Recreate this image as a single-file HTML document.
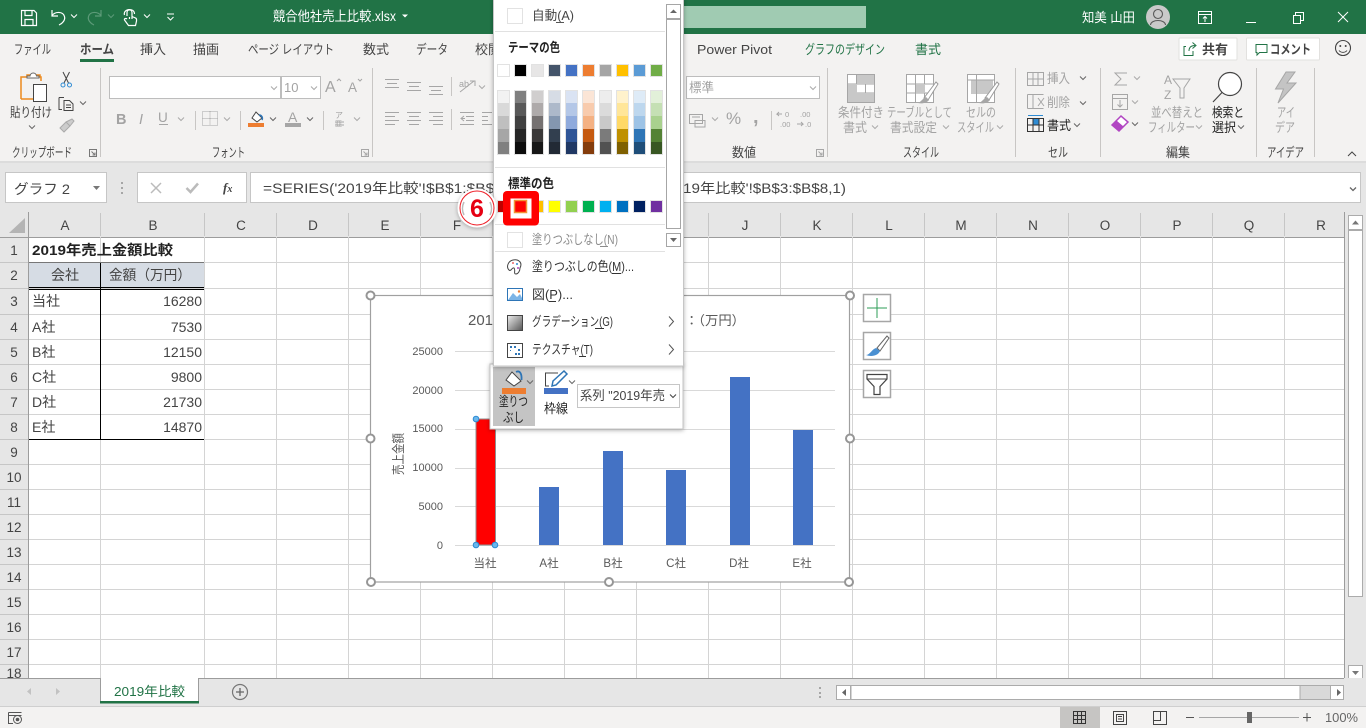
<!DOCTYPE html>
<html lang="ja"><head><meta charset="utf-8"><title>競合他社売上比較.xlsx - Excel</title>
<style>
html,body{margin:0;padding:0;background:#fff;overflow:hidden}
svg{display:block;font-family:"Liberation Sans","Noto Sans CJK JP",sans-serif;font-size:13px}
text{fill:#444;white-space:pre}
.d{fill:#a3a3a3}.w{fill:#fff}.g{fill:#217346}.k{fill:#222}.m{fill:#595959}
.n{fill:none}.ic{fill:none;stroke:#444;stroke-width:1}.dc{fill:none;stroke:#a6a6a6;stroke-width:1}
.ch{fill:none;stroke:#666;stroke-width:1}.chd{fill:none;stroke:#aaa;stroke-width:1}
.gl line{stroke:#d4d4d4;stroke-width:1}
.c{text-anchor:middle}.r{text-anchor:end}
.sw rect{stroke:#e2e2e2;stroke-width:1}
.hd{fill:#fff;stroke:#969696;stroke-width:2}
.bh{fill:#6bb7ec;stroke:#2e8bd3;stroke-width:1}
</style></head><body>
<svg width="1366" height="728" viewBox="0 0 1366 728" xmlns="http://www.w3.org/2000/svg">
<defs>
<path id="c" d="M-3-1.5L0 1.5L3-1.5"/>
<filter id="sh" x="-10%" y="-10%" width="120%" height="120%"><feDropShadow dx="0" dy="1" stdDeviation="2" flood-color="#000" flood-opacity=".3"/></filter>
<linearGradient id="gg" x1="0" y1="0" x2="1" y2="1"><stop offset="0" stop-color="#eee"/><stop offset="1" stop-color="#555"/></linearGradient>
</defs>
<rect width="1366" height="728" fill="#fff"/>
<!-- title bar -->
<rect width="1366" height="34" fill="#217346"/>
<rect x="673" y="6" width="193" height="22" fill="#a0cbb2"/>
<g fill="none" stroke="#fff" stroke-width="1.2">
<path d="M21.5 10.5H34L36.5 13V25.5H21.5Z M25 10.5V15.5H32V10.5 M25 25.5V19.5H33V25.5"/>
<path d="M52 10V16H58 M52 15.5C55 11.5 63 11 64.5 16.5C65.5 20 62.5 23.5 59 25"/>
<path d="M101 10V16H95 M101 15.5C98 11.5 90 11 88.5 16.5C87.5 20 90.5 23.5 94 25" stroke="#5c9a78"/>
<path d="M127 16V12.5C127 9 132 9 132 12.5V16.5L135.5 18C137 18.5 136.5 20 136.5 21L135.5 25.5H128.5L124.5 20C124 18.5 126 18 127 19M129.5 17V19M132 17V19"/>
<path d="M124.5 15C122.5 9 134.5 7 134.5 14"/>
</g>
<g fill="none" stroke="#fff"><use href="#c" x="74" y="16"/><use href="#c" x="147" y="16"/><use href="#c" x="111" y="16" stroke="#5c9a78"/><path d="M167 14H174M167.5 17L170.5 20L173.5 17"/></g>
<text x="273" y="21" class="w" font-size="13.5" textLength="123" lengthAdjust="spacingAndGlyphs">競合他社売上比較.xlsx</text>
<path d="M402 14.5H408L405 17.5Z" fill="#fff"/>
<text x="1082" y="22" class="w" font-size="13" textLength="53" lengthAdjust="spacingAndGlyphs">知美 山田</text>
<circle cx="1158" cy="17" r="12" fill="#c9c9c9"/>
<g fill="none" stroke="#5a5a5a" stroke-width="1.1"><circle cx="1158" cy="14" r="4.5"/><path d="M1150.5 25C1151 19 1165 19 1165.5 25"/></g>
<g fill="none" stroke="#fff"><path d="M1198.5 11.5H1211.5V23.5H1198.5ZM1198.5 14.5H1211.5M1205 22V17M1203 18.5L1205 16.5L1207 18.5"/><path d="M1246 22.5H1256"/><path d="M1293.5 15.5H1300.5V23.5H1293.5ZM1295.5 15.5V12.5H1303.5V20.5H1300.5"/><path d="M1338 12L1348 22"/><path d="M1348 12L1338 22"/></g>
<!-- ribbon -->
<rect y="34" width="1366" height="127" fill="#f3f2f1"/>
<rect y="161" width="1366" height="51" fill="#e6e6e6"/>
<rect y="161" width="1366" height="2" fill="#dcdcdc"/>
<text x="14" y="54" textLength="37" lengthAdjust="spacingAndGlyphs">ファイル</text>
<text x="80" y="54" font-weight="bold" textLength="34" lengthAdjust="spacingAndGlyphs">ホーム</text>
<rect x="80" y="59" width="34" height="3" fill="#217346"/>
<text x="140" y="54" textLength="26" lengthAdjust="spacingAndGlyphs">挿入</text>
<text x="193" y="54" textLength="26" lengthAdjust="spacingAndGlyphs">描画</text>
<text x="248" y="54" textLength="86" lengthAdjust="spacingAndGlyphs">ページ レイアウト</text>
<text x="363" y="54" textLength="26" lengthAdjust="spacingAndGlyphs">数式</text>
<text x="416" y="54" textLength="32" lengthAdjust="spacingAndGlyphs">データ</text>
<text x="475" y="54" textLength="26" lengthAdjust="spacingAndGlyphs">校閲</text>
<text x="697" y="54" textLength="75" lengthAdjust="spacingAndGlyphs" font-size="12.5">Power Pivot</text>
<text x="805" y="54" class="g" textLength="80" lengthAdjust="spacingAndGlyphs">グラフのデザイン</text>
<text x="915" y="54" class="g" textLength="26" lengthAdjust="spacingAndGlyphs">書式</text>
<rect x="1179" y="38" width="58" height="22" rx="1" fill="#fff" stroke="#e2e1df"/>
<path d="M1186 46.5H1184V55.5H1193V51M1189 51C1189 47 1191 45.5 1195 45.5M1192.5 42.5L1196 45.5L1192.5 48.5" fill="none" stroke="#217346"/>
<text x="1202" y="54" font-weight="bold" textLength="26" lengthAdjust="spacingAndGlyphs">共有</text>
<rect x="1246.5" y="38" width="73" height="22" rx="1" fill="#fff" stroke="#e2e1df"/>
<path d="M1256 44.5H1267V52.5H1259.5L1257 55V52.5H1256Z" fill="none" stroke="#217346"/>
<text x="1270" y="54" font-weight="bold" textLength="41" lengthAdjust="spacingAndGlyphs">コメント</text>
<circle cx="1343" cy="48" r="7.5" fill="none" stroke="#444" stroke-width="1.1"/><circle cx="1340.3" cy="46" r="1" fill="#444"/><circle cx="1345.7" cy="46" r="1" fill="#444"/><path d="M1339 50.5C1341 53 1345 53 1347 50.5" fill="none" stroke="#444"/>
<g fill="#c8c6c4"><rect x="100" y="68" width="1" height="89"/><rect x="372" y="68" width="1" height="89"/><rect x="827" y="68" width="1" height="89"/><rect x="1015" y="68" width="1" height="89"/><rect x="1100" y="68" width="1" height="89"/><rect x="1256" y="68" width="1" height="89"/><rect x="1314" y="68" width="1" height="89"/></g>
<!-- clipboard -->
<path d="M21 99V77H27V75H40V77H41V81" fill="none" stroke="#ed8a1e" stroke-width="1.5"/><path d="M21 99H33" stroke="#ed8a1e" stroke-width="1.5"/>
<path d="M27 78V76H30C30.5 72 36 72 36.5 76H39V78Z" fill="#fff" stroke="#666"/>
<rect x="33.5" y="84.5" width="13" height="17" fill="#fff" stroke="#444"/>
<text x="10" y="117" textLength="42" lengthAdjust="spacingAndGlyphs">貼り付け</text>
<use href="#c" x="32" y="127" class="ch"/>
<g fill="none" stroke="#444"><path d="M63 72L68.5 83M69.5 72L64 83"/></g><g fill="none" stroke="#2e8bd3"><circle cx="63" cy="85" r="2"/><circle cx="69.5" cy="85" r="2"/></g>
<path d="M59 97.5H64M59 97.5V109.5H62M64 100.5H69.5L73 104V110.5H64Z M66 105H71M66 107.5H71" fill="none" stroke="#444"/>
<use href="#c" x="83" y="103" class="ch"/>
<path d="M60 128L66 122L70 126L64 132ZM66 122L72 119L74 121L70 126" fill="#ccc" stroke="#aaa"/>
<text x="12" y="157" textLength="60" lengthAdjust="spacingAndGlyphs">クリップボード</text>
<path d="M89.5 149.5H96.5V156.5H89.5ZM91.5 151.5L95 155M95 152.5V155H92.5" fill="none" stroke="#777"/>
<!-- font -->
<rect x="109.5" y="76.5" width="171" height="22" fill="#fff" stroke="#bdbdbd"/>
<rect x="281.5" y="76.5" width="39" height="22" fill="#fff" stroke="#bdbdbd"/>
<use href="#c" x="274" y="88" class="chd"/><use href="#c" x="314" y="88" class="chd"/>
<text x="284" y="92" class="d">10</text>
<text x="325" y="92" class="d" font-size="16">A</text><path d="M337 81L339 79L341 81" class="dc"/>
<text x="348" y="92" class="d" font-size="13.5">A</text><path d="M358 79L360 81L362 79" class="dc"/>
<text x="116" y="124" class="d" font-weight="bold" font-size="14.5">B</text>
<text x="139" y="124" class="d" font-style="italic" font-size="14.5">I</text>
<text x="158" y="122" class="d" font-size="13.5">U</text><rect x="159" y="124" width="9" height="1" fill="#a6a6a6"/>
<use href="#c" x="181" y="119" class="chd"/>
<rect x="195" y="111" width="1" height="19" fill="#c8c6c4"/>
<path d="M202.5 111.5H217.5V125.5H202.5ZM210 111.5V125.5M202.5 118.5H217.5" class="dc" stroke-dasharray="1 1"/>
<use href="#c" x="227" y="119" class="chd"/>
<rect x="240" y="111" width="1" height="19" fill="#c8c6c4"/>
<path d="M252 118L256 112L262 118L257 122Z" fill="#fff" stroke="#444"/><path d="M259 115C262 115 263 118 262 120" fill="none" stroke="#2e75b6" stroke-width="1.5"/>
<rect x="248" y="123" width="16" height="4" fill="#ed7d31"/>
<use href="#c" x="273" y="119" class="ch"/>
<text x="288" y="122" class="d" font-size="14">A</text><rect x="285" y="123" width="16" height="4" fill="#a6a6a6"/>
<use href="#c" x="310" y="119" class="ch"/>
<rect x="323" y="111" width="1" height="19" fill="#c8c6c4"/>
<text x="335" y="118" class="d" font-size="8">ア</text><path d="M335 122H344M335 125H344" class="dc"/><text x="335" y="126" class="d" font-size="7">亜</text>
<use href="#c" x="357" y="119" class="chd"/>
<text x="212" y="157" textLength="33" lengthAdjust="spacingAndGlyphs">フォント</text>
<path d="M361.5 149.5H368.5V156.5H361.5ZM363.5 151.5L367 155M367 152.5V155H364.5" class="dc"/>
<!-- align -->
<path d="M385 79.5H399M387 83.5H397M385 87.5H399 M407 82.5H421M409 86.5H419M407 90.5H421 M429 86.5H443M431 90.5H441M429 94.5H443" class="dc"/>
<rect x="451" y="77" width="1" height="19" fill="#c8c6c4"/>
<path d="M460 92L474 81M470 81H475V86" class="dc"/><text x="459" y="87" class="d" font-size="9">ab</text>
<use href="#c" x="482" y="87" class="chd"/>
<path d="M385 112.5H399M385 116.5H395M385 120.5H399M385 124.5H395 M407 112.5H421M409 116.5H419M407 120.5H421M409 124.5H419 M429 112.5H443M433 116.5H443M429 120.5H443M433 124.5H443" class="dc"/>
<rect x="451" y="109" width="1" height="21" fill="#c8c6c4"/>
<path d="M460 112.5H474M466 116.5H474M466 120.5H474M460 124.5H474M464 116L461 118.5L464 121M461 118.5H465 M482 112.5H492M482 124.5H492M482 116.5H488M482 120.5H488" class="dc"/>
<!-- number -->
<rect x="686.5" y="76.5" width="133" height="22" fill="#fff" stroke="#bdbdbd"/>
<text x="689" y="92" class="d" textLength="25" lengthAdjust="spacingAndGlyphs">標準</text>
<use href="#c" x="813" y="88" class="chd"/>
<path d="M689.5 114.5H702.5V123.5H689.5ZM692 117H700M695 120.5H705V127H695Z" class="dc"/>
<use href="#c" x="715" y="119" class="chd"/>
<text x="726" y="124" class="d" font-size="17">%</text>
<text x="753" y="123" class="d" font-size="20" font-weight="bold">,</text>
<rect x="771" y="111" width="1" height="19" fill="#c8c6c4"/>
<text x="785" y="117" class="d" font-size="7.5">0</text><text x="780" y="127" class="d" font-size="7.5">.00</text><path d="M782 114H777L779 112M777 114L779 116" class="dc"/>
<text x="800" y="117" class="d" font-size="7.5">.00</text><text x="805" y="127" class="d" font-size="7.5">.0</text><path d="M797 124H803L801 122M803 124L801 126" class="dc"/>
<text x="732" y="157" textLength="24" lengthAdjust="spacingAndGlyphs">数値</text>
<path d="M816.5 149.5H823.5V156.5H816.5ZM818.5 151.5L822 155M822 152.5V155H819.5" class="dc"/>
<!-- styles -->
<g stroke="#a6a6a6" fill="#fff"><rect x="847.5" y="74.5" width="27" height="28"/><rect x="906.5" y="74.5" width="27" height="28"/><rect x="967.5" y="74.5" width="27" height="28"/></g>
<path d="M847.5 84H874.5M847.5 93H874.5M856.5 74.5V102.5M865.5 74.5V102.5" class="dc"/>
<rect x="848" y="84" width="9" height="9" fill="#c8c8c8"/><rect x="857" y="75" width="17" height="9" fill="#c8c8c8"/><rect x="848" y="93" width="26" height="9" fill="#c8c8c8"/>
<path d="M906.5 84H933.5M906.5 93H933.5M915.5 74.5V102.5M924.5 74.5V102.5" class="dc"/>
<rect x="916" y="84" width="9" height="9" fill="#c8c8c8"/>
<rect x="971" y="80" width="22" height="14" fill="#c8c8c8"/>
<path d="M967.5 80H994.5M976.5 74.5V102.5" class="dc"/>
<g fill="#fff" stroke="#999"><path d="M924 98L936 82L938 84L928 100Z"/><path d="M985 98L997 82L999 84L989 100Z"/></g>
<path d="M918 103C921 102 923 98 926 97L929 100C927 103 922 104 918 103ZM979 103C982 102 984 98 987 97L990 100C988 103 983 104 979 103Z" fill="#a6a6a6"/>
<text x="838" y="117" class="d" textLength="46" lengthAdjust="spacingAndGlyphs">条件付き</text>
<text x="843" y="132" class="d" textLength="24" lengthAdjust="spacingAndGlyphs">書式</text><use href="#c" x="875" y="127" class="chd"/>
<text x="887" y="117" class="d" textLength="65" lengthAdjust="spacingAndGlyphs">テーブルとして</text>
<text x="890" y="132" class="d" textLength="47" lengthAdjust="spacingAndGlyphs">書式設定</text><use href="#c" x="946" y="127" class="chd"/>
<text x="966" y="117" class="d" textLength="30" lengthAdjust="spacingAndGlyphs">セルの</text>
<text x="957" y="132" class="d" textLength="37" lengthAdjust="spacingAndGlyphs">スタイル</text><use href="#c" x="1000" y="127" class="chd"/>
<text x="903" y="157" textLength="36" lengthAdjust="spacingAndGlyphs">スタイル</text>
<!-- cells -->
<path d="M1027.5 72.5H1043.5V85.5H1027.5ZM1033 72.5V85.5M1038 72.5V85.5M1027.5 79H1043.5" class="dc"/>
<text x="1047" y="83" class="d" textLength="23" lengthAdjust="spacingAndGlyphs">挿入</text><use href="#c" x="1083" y="78" class="ch"/>
<path d="M1027.5 94.5H1043.5M1027.5 108.5H1043.5M1027.5 94.5V108.5M1033 94.5V108.5M1038 98L1044 106M1044 98L1038 106" class="dc"/>
<text x="1047" y="107" class="d" textLength="23" lengthAdjust="spacingAndGlyphs">削除</text><use href="#c" x="1083" y="103" class="ch"/>
<rect x="1033" y="119" width="6" height="6" fill="#2e8bd3"/>
<path d="M1027.5 118.5H1043.5V131.5H1027.5ZM1033 118.5V131.5M1039 118.5V131.5M1027.5 125H1043.5" fill="none" stroke="#333"/><path d="M1028 115.5H1043" stroke="#2e8bd3"/>
<text x="1047" y="130" class="k" textLength="24" lengthAdjust="spacingAndGlyphs">書式</text><use href="#c" x="1077" y="125" class="ch"/>
<text x="1048" y="157" textLength="20" lengthAdjust="spacingAndGlyphs">セル</text>
<!-- editing -->
<path d="M1127 73H1115L1121 79L1115 85H1127" class="dc"/><use href="#c" x="1137" y="78" class="chd"/>
<path d="M1112.5 94.5H1127.5V109.5H1112.5ZM1112.5 98.5H1127.5M1120 100V107M1117.5 104.5L1120 107L1122.5 104.5" class="dc"/><use href="#c" x="1135" y="102" class="chd"/>
<path d="M1112 125L1121 116L1128 122L1119 131Z" fill="#fff" stroke="#b146c2" stroke-width="1.5"/><path d="M1112 125L1116.5 120.5L1123.5 126.5L1119 131Z" fill="#b146c2"/><use href="#c" x="1135" y="124" class="ch"/>
<text x="1164" y="84" class="d" font-size="12">A</text><text x="1164" y="99" class="d" font-size="12">Z</text>
<path d="M1173 79H1190L1184 88V98H1180V88Z" class="dc"/>
<text x="1151" y="117" class="d" textLength="52" lengthAdjust="spacingAndGlyphs">並べ替えと</text>
<text x="1148" y="132" class="d" textLength="47" lengthAdjust="spacingAndGlyphs">フィルター</text><use href="#c" x="1199" y="127" class="chd"/>
<circle cx="1230" cy="84" r="11.5" fill="#fff" stroke="#444" stroke-width="1.2"/><path d="M1222 92.5L1213 102" stroke="#444" stroke-width="1.2"/>
<text x="1212" y="117" class="k" textLength="32" lengthAdjust="spacingAndGlyphs">検索と</text>
<text x="1212" y="132" class="k" textLength="24" lengthAdjust="spacingAndGlyphs">選択</text><use href="#c" x="1241" y="127" class="ch"/>
<text x="1166" y="157" textLength="24" lengthAdjust="spacingAndGlyphs">編集</text>
<path d="M1286 72L1275.5 89H1283.5L1278 103L1296 83H1287L1295 72Z" fill="#c4c4c4" stroke="#a6a6a6"/>
<text x="1277" y="117" class="d" textLength="18" lengthAdjust="spacingAndGlyphs">アイ</text>
<text x="1275" y="132" class="d" textLength="20" lengthAdjust="spacingAndGlyphs">デア</text>
<text x="1267" y="157" textLength="37" lengthAdjust="spacingAndGlyphs">アイデア</text>
<path d="M1348 156L1352 152L1356 156" fill="none" stroke="#444"/>
<!-- formula bar -->
<rect x="5.5" y="172.5" width="101" height="30" fill="#fff" stroke="#c6c6c6"/>
<text x="14" y="194" font-size="14" textLength="56" lengthAdjust="spacingAndGlyphs">グラフ 2</text>
<path d="M93 186H100L96.5 190Z" fill="#777"/>
<g fill="#a6a6a6"><rect x="121" y="182" width="2" height="2"/><rect x="121" y="187" width="2" height="2"/><rect x="121" y="192" width="2" height="2"/></g>
<rect x="137.5" y="172.5" width="109" height="30" fill="#fff" stroke="#c6c6c6"/>
<path d="M151 183L161 193M161 183L151 193" stroke="#bbb" stroke-width="1.5" fill="none"/>
<path d="M186.5 188L190.5 192L198 183.5" stroke="#bbb" stroke-width="2.5" fill="none"/>
<text x="223" y="192" font-family="Liberation Serif" font-style="italic" font-weight="bold" font-size="13">f<tspan font-size="10">x</tspan></text>
<rect x="250.5" y="172.5" width="1110" height="30" fill="#fff" stroke="#c6c6c6"/>
<text x="263" y="193" font-size="13.5" fill="#555" textLength="240" lengthAdjust="spacingAndGlyphs">=SERIES('2019年比較'!$B$1:$B$2</text>
<text x="683" y="193" font-size="13.5" textLength="163" lengthAdjust="spacingAndGlyphs">19年比較'!$B$3:$B$8,1)</text>
<use href="#c" x="1353" y="189" stroke="#666" fill="none" stroke-width="1.3"/>
<!-- headers -->
<rect y="212" width="1346" height="25" fill="#e6e6e6"/>
<rect y="237" width="29" height="441" fill="#e6e6e6"/>
<path d="M25 233V218L9 233Z" fill="#b4b4b4"/>
<path d="M0 237.5H1344M28.5 212V678" stroke="#9c9c9c" fill="none"/>
<path d="M100.5 213V236M204.5 213V236M276.5 213V236M348.5 213V236M420.5 213V236M492.5 213V236M564.5 213V236M636.5 213V236M708.5 213V236M780.5 213V236M852.5 213V236M924.5 213V236M996.5 213V236M1068.5 213V236M1140.5 213V236M1212.5 213V236M1284.5 213V236M1344.5 213V236" stroke="#c6c6c6" fill="none"/>
<g class="c" font-size="13.5">
<text x="65" y="230" class="c">A</text><text x="153" y="230" class="c">B</text><text x="241" y="230" class="c">C</text><text x="313" y="230" class="c">D</text><text x="385" y="230" class="c">E</text><text x="457" y="230" class="c">F</text><text x="745" y="230" class="c">J</text><text x="817" y="230" class="c">K</text><text x="889" y="230" class="c">L</text><text x="961" y="230" class="c">M</text><text x="1033" y="230" class="c">N</text><text x="1105" y="230" class="c">O</text><text x="1177" y="230" class="c">P</text><text x="1249" y="230" class="c">Q</text><text x="1321" y="230" class="c">R</text>
</g>
<path d="M0 262.5H28M0 288.5H28M0 314.5H28M0 339.5H28M0 364.5H28M0 389.5H28M0 414.5H28M0 439.5H28M0 464.5H28M0 489.5H28M0 514.5H28M0 539.5H28M0 564.5H28M0 589.5H28M0 614.5H28M0 639.5H28M0 664.5H28" stroke="#c6c6c6" fill="none"/>
<g font-size="13.5">
<text x="14" y="255" class="c">1</text><text x="14" y="280" class="c">2</text><text x="14" y="306" class="c">3</text><text x="14" y="332" class="c">4</text><text x="14" y="357" class="c">5</text><text x="14" y="382" class="c">6</text><text x="14" y="407" class="c">7</text><text x="14" y="432" class="c">8</text><text x="14" y="457" class="c">9</text><text x="14" y="482" class="c">10</text><text x="14" y="507" class="c">11</text><text x="14" y="532" class="c">12</text><text x="14" y="557" class="c">13</text><text x="14" y="582" class="c">14</text><text x="14" y="607" class="c">15</text><text x="14" y="632" class="c">16</text><text x="14" y="657" class="c">17</text><text x="14" y="678" class="c">18</text>
</g>
<!-- grid -->
<g class="gl">
<line x1="100.5" y1="237" x2="100.5" y2="678"/><line x1="204.5" y1="237" x2="204.5" y2="678"/><line x1="276.5" y1="237" x2="276.5" y2="678"/><line x1="348.5" y1="237" x2="348.5" y2="678"/><line x1="420.5" y1="237" x2="420.5" y2="678"/><line x1="492.5" y1="237" x2="492.5" y2="678"/><line x1="564.5" y1="237" x2="564.5" y2="678"/><line x1="636.5" y1="237" x2="636.5" y2="678"/><line x1="708.5" y1="237" x2="708.5" y2="678"/><line x1="780.5" y1="237" x2="780.5" y2="678"/><line x1="852.5" y1="237" x2="852.5" y2="678"/><line x1="924.5" y1="237" x2="924.5" y2="678"/><line x1="996.5" y1="237" x2="996.5" y2="678"/><line x1="1068.5" y1="237" x2="1068.5" y2="678"/><line x1="1140.5" y1="237" x2="1140.5" y2="678"/><line x1="1212.5" y1="237" x2="1212.5" y2="678"/><line x1="1284.5" y1="237" x2="1284.5" y2="678"/>
<line x1="29" y1="262.5" x2="1344" y2="262.5"/><line x1="29" y1="288.5" x2="1344" y2="288.5"/><line x1="29" y1="314.5" x2="1344" y2="314.5"/><line x1="29" y1="339.5" x2="1344" y2="339.5"/><line x1="29" y1="364.5" x2="1344" y2="364.5"/><line x1="29" y1="389.5" x2="1344" y2="389.5"/><line x1="29" y1="414.5" x2="1344" y2="414.5"/><line x1="29" y1="439.5" x2="1344" y2="439.5"/><line x1="29" y1="464.5" x2="1344" y2="464.5"/><line x1="29" y1="489.5" x2="1344" y2="489.5"/><line x1="29" y1="514.5" x2="1344" y2="514.5"/><line x1="29" y1="539.5" x2="1344" y2="539.5"/><line x1="29" y1="564.5" x2="1344" y2="564.5"/><line x1="29" y1="589.5" x2="1344" y2="589.5"/><line x1="29" y1="614.5" x2="1344" y2="614.5"/><line x1="29" y1="639.5" x2="1344" y2="639.5"/><line x1="29" y1="664.5" x2="1344" y2="664.5"/>
</g>
<path d="M1344.5 212V678" stroke="#9c9c9c"/>
<!-- cells data -->
<rect x="29" y="263" width="175" height="25" fill="#d6dce4"/>
<path d="M29 262.5H204" stroke="#777"/>
<path d="M100.5 263V440" stroke="#000"/>
<path d="M29 287.5H204M29 289.5H204M29 439.5H204" stroke="#000"/>
<text x="32" y="255" font-size="14" font-weight="bold" class="k" textLength="141" lengthAdjust="spacingAndGlyphs">2019年売上金額比較</text>
<text x="65" y="280" font-size="14" class="c">会社</text>
<text x="109" y="280" font-size="14" textLength="82" lengthAdjust="spacingAndGlyphs">金額（万円）</text>
<g font-size="14">
<text x="32" y="306">当社</text><text x="32" y="332">A社</text><text x="32" y="357">B社</text><text x="32" y="382">C社</text><text x="32" y="407">D社</text><text x="32" y="432">E社</text>
<text x="202" y="306" class="r">16280</text><text x="202" y="332" class="r">7530</text><text x="202" y="357" class="r">12150</text><text x="202" y="382" class="r">9800</text><text x="202" y="407" class="r">21730</text><text x="202" y="432" class="r">14870</text>
</g>
<!-- chart -->
<rect x="370.5" y="295.5" width="479" height="286.5" fill="#fff" stroke="#a0a0a0" stroke-width="1.2"/>
<g stroke="#d9d9d9"><path d="M455 351.5H835M455 390.5H835M455 429.5H835M455 468.5H835M455 506.5H835M455 545.5H835"/></g>
<g font-size="11"><text x="443" y="355" class="r m">25000</text><text x="443" y="394" class="r m">20000</text><text x="443" y="432" class="r m">15000</text><text x="443" y="471" class="r m">10000</text><text x="443" y="510" class="r m">5000</text><text x="443" y="549" class="r m">0</text></g>
<text x="468" y="325" font-size="15" class="m">2019</text>
<text x="685" y="325" font-size="13" class="m" textLength="60" lengthAdjust="spacingAndGlyphs">：（万円）</text>
<text transform="translate(403,475) rotate(-90)" font-size="13" class="m" textLength="42" lengthAdjust="spacingAndGlyphs">売上金額</text>
<rect x="476" y="419" width="19.5" height="126" fill="#f00" stroke="#8f8f8f"/>
<g fill="#4472c4"><rect x="539" y="487" width="20" height="58"/><rect x="603" y="451" width="20" height="94"/><rect x="666" y="470" width="20" height="75"/><rect x="730" y="377" width="20" height="168"/><rect x="793" y="430" width="20" height="115"/></g>
<g font-size="11.5"><text x="485" y="567" class="c m">当社</text><text x="549" y="567" class="c m">A社</text><text x="613" y="567" class="c m">B社</text><text x="676" y="567" class="c m">C社</text><text x="739" y="567" class="c m">D社</text><text x="802" y="567" class="c m">E社</text></g>
<circle cx="476" cy="419" r="2.8" class="bh"/><circle cx="476" cy="545" r="2.8" class="bh"/><circle cx="495" cy="545" r="2.8" class="bh"/>
<circle cx="370.5" cy="295.5" r="4" class="hd"/><circle cx="850" cy="295.5" r="4" class="hd"/><circle cx="370.5" cy="438.5" r="4" class="hd"/><circle cx="850" cy="438.5" r="4" class="hd"/><circle cx="371" cy="582" r="4" class="hd"/><circle cx="609" cy="582" r="4" class="hd"/><circle cx="849" cy="582" r="4" class="hd"/>
<!-- chart buttons -->
<g fill="#fff" stroke="#a6a6a6" stroke-width="1.5"><rect x="863.5" y="294.5" width="27" height="27"/><rect x="863.5" y="332.5" width="27" height="27"/><rect x="863.5" y="370.5" width="27" height="27"/></g>
<path d="M877 298V318M867 308H887" stroke="#2e9e57" fill="none"/>
<path d="M877 348L887 336L889 338L880 351Z" fill="#fff" stroke="#666"/><path d="M866 355C870 355 872 349 876 348L880 351C878 356 871 357 866 355Z" fill="#4a90d2"/>
<path d="M867 374.5H887V379L880 386.5V394.5H874V386.5L867 379Z" fill="#fff" stroke="#444" stroke-width="1.2"/><path d="M867 379H887" stroke="#444"/>
<!-- mini toolbar -->
<rect x="490" y="364" width="193" height="65" fill="#fff" stroke="#c6c6c6" filter="url(#sh)"/>
<rect x="493" y="367" width="42" height="59" fill="#c4c4c4"/>
<path d="M506 380L512 372L521 381L514 386Z" fill="#fff" stroke="#444"/><path d="M516 372C520 370 522 374 521.5 380" fill="none" stroke="#2e75b6" stroke-width="1.8"/>
<rect x="502" y="388" width="24" height="6" fill="#ed7d31"/>
<use href="#c" x="530" y="382" class="ch"/>
<text x="499" y="406" class="k" textLength="29" lengthAdjust="spacingAndGlyphs">塗りつ</text>
<text x="503" y="422" class="k" textLength="21" lengthAdjust="spacingAndGlyphs">ぶし</text>
<path d="M549 386H545.5V373H558" fill="none" stroke="#444"/><path d="M552 386L553 381L564 371L567 374L556 385Z" fill="#fff" stroke="#2e75b6" stroke-width="1.5"/>
<rect x="544" y="388" width="24" height="6" fill="#4472c4"/>
<use href="#c" x="572" y="382" class="ch"/>
<text x="544" y="413" class="k" textLength="24" lengthAdjust="spacingAndGlyphs">枠線</text>
<rect x="577.5" y="384.5" width="102" height="23" fill="#fff" stroke="#c6c6c6"/>
<text x="580" y="400" font-size="13" textLength="85" lengthAdjust="spacingAndGlyphs">系列 "2019年売</text>
<use href="#c" x="673" y="396" stroke="#444" fill="none"/>
<!-- menu -->
<rect x="493.5" y="-2" width="190" height="368" fill="#fff" stroke="#c6c6c6" filter="url(#sh)"/>
<rect x="507.5" y="8.5" width="15" height="15" fill="#fff" stroke="#e2e2e2"/>
<text x="532" y="20" fill="#555" textLength="42" lengthAdjust="spacingAndGlyphs">自動(A)</text><rect x="556" y="22" width="8" height="1" fill="#555"/>
<g stroke="#e1e1e1"><path d="M495 31.5H665M495 167.5H665M495 224.5H665M495 251.5H665"/></g>
<text x="508" y="52" font-weight="bold" class="k" textLength="52" lengthAdjust="spacingAndGlyphs">テーマの色</text>
<text x="508" y="188" font-weight="bold" class="k" textLength="46" lengthAdjust="spacingAndGlyphs">標準の色</text>
<g class="sw">
<rect x="497.5" y="64.5" width="12" height="12" fill="#fff"/><rect x="514.5" y="64.5" width="12" height="12" fill="#000"/><rect x="531.5" y="64.5" width="12" height="12" fill="#e7e6e6"/><rect x="548.5" y="64.5" width="12" height="12" fill="#44546a"/><rect x="565.5" y="64.5" width="12" height="12" fill="#4472c4"/><rect x="582.5" y="64.5" width="12" height="12" fill="#ed7d31"/><rect x="599.5" y="64.5" width="12" height="12" fill="#a5a5a5"/><rect x="616.5" y="64.5" width="12" height="12" fill="#ffc000"/><rect x="633.5" y="64.5" width="12" height="12" fill="#5b9bd5"/><rect x="650.5" y="64.5" width="12" height="12" fill="#70ad47"/>
<rect x="497.5" y="200.5" width="12" height="12" fill="#c00000"/><rect x="531.5" y="200.5" width="12" height="12" fill="#ffc000"/><rect x="548.5" y="200.5" width="12" height="12" fill="#ffff00"/><rect x="565.5" y="200.5" width="12" height="12" fill="#92d050"/><rect x="582.5" y="200.5" width="12" height="12" fill="#00b050"/><rect x="599.5" y="200.5" width="12" height="12" fill="#00b0f0"/><rect x="616.5" y="200.5" width="12" height="12" fill="#0070c0"/><rect x="633.5" y="200.5" width="12" height="12" fill="#002060"/><rect x="650.5" y="200.5" width="12" height="12" fill="#7030a0"/>
</g>
<g>
<rect x="497" y="90" width="13" height="65" fill="#e2e2e2"/><rect x="514" y="90" width="13" height="65" fill="#e2e2e2"/><rect x="531" y="90" width="13" height="65" fill="#e2e2e2"/><rect x="548" y="90" width="13" height="65" fill="#e2e2e2"/><rect x="565" y="90" width="13" height="65" fill="#e2e2e2"/><rect x="582" y="90" width="13" height="65" fill="#e2e2e2"/><rect x="599" y="90" width="13" height="65" fill="#e2e2e2"/><rect x="616" y="90" width="13" height="65" fill="#e2e2e2"/><rect x="633" y="90" width="13" height="65" fill="#e2e2e2"/><rect x="650" y="90" width="13" height="65" fill="#e2e2e2"/>
<rect x="498" y="91" width="11" height="12" fill="#f2f2f2"/><rect x="498" y="103" width="11" height="13" fill="#d9d9d9"/><rect x="498" y="116" width="11" height="13" fill="#bfbfbf"/><rect x="498" y="129" width="11" height="13" fill="#a6a6a6"/><rect x="498" y="142" width="11" height="12" fill="#808080"/>
<rect x="515" y="91" width="11" height="12" fill="#7f7f7f"/><rect x="515" y="103" width="11" height="13" fill="#595959"/><rect x="515" y="116" width="11" height="13" fill="#404040"/><rect x="515" y="129" width="11" height="13" fill="#262626"/><rect x="515" y="142" width="11" height="12" fill="#0d0d0d"/>
<rect x="532" y="91" width="11" height="12" fill="#d0cece"/><rect x="532" y="103" width="11" height="13" fill="#aeaaaa"/><rect x="532" y="116" width="11" height="13" fill="#757171"/><rect x="532" y="129" width="11" height="13" fill="#3a3838"/><rect x="532" y="142" width="11" height="12" fill="#171717"/>
<rect x="549" y="91" width="11" height="12" fill="#d6dce5"/><rect x="549" y="103" width="11" height="13" fill="#adb9ca"/><rect x="549" y="116" width="11" height="13" fill="#8497b0"/><rect x="549" y="129" width="11" height="13" fill="#323f4f"/><rect x="549" y="142" width="11" height="12" fill="#222a35"/>
<rect x="566" y="91" width="11" height="12" fill="#dae3f3"/><rect x="566" y="103" width="11" height="13" fill="#b4c7e7"/><rect x="566" y="116" width="11" height="13" fill="#8faadc"/><rect x="566" y="129" width="11" height="13" fill="#2f5597"/><rect x="566" y="142" width="11" height="12" fill="#203864"/>
<rect x="583" y="91" width="11" height="12" fill="#fbe5d6"/><rect x="583" y="103" width="11" height="13" fill="#f8cbad"/><rect x="583" y="116" width="11" height="13" fill="#f4b183"/><rect x="583" y="129" width="11" height="13" fill="#c55a11"/><rect x="583" y="142" width="11" height="12" fill="#843c0c"/>
<rect x="600" y="91" width="11" height="12" fill="#ededed"/><rect x="600" y="103" width="11" height="13" fill="#dbdbdb"/><rect x="600" y="116" width="11" height="13" fill="#c9c9c9"/><rect x="600" y="129" width="11" height="13" fill="#7b7b7b"/><rect x="600" y="142" width="11" height="12" fill="#525252"/>
<rect x="617" y="91" width="11" height="12" fill="#fff2cc"/><rect x="617" y="103" width="11" height="13" fill="#ffe699"/><rect x="617" y="116" width="11" height="13" fill="#ffd966"/><rect x="617" y="129" width="11" height="13" fill="#bf9000"/><rect x="617" y="142" width="11" height="12" fill="#7f6000"/>
<rect x="634" y="91" width="11" height="12" fill="#deebf7"/><rect x="634" y="103" width="11" height="13" fill="#bdd7ee"/><rect x="634" y="116" width="11" height="13" fill="#9dc3e6"/><rect x="634" y="129" width="11" height="13" fill="#2e75b6"/><rect x="634" y="142" width="11" height="12" fill="#1f4e79"/>
<rect x="651" y="91" width="11" height="12" fill="#e2f0d9"/><rect x="651" y="103" width="11" height="13" fill="#c5e0b4"/><rect x="651" y="116" width="11" height="13" fill="#a9d18e"/><rect x="651" y="129" width="11" height="13" fill="#548235"/><rect x="651" y="142" width="11" height="12" fill="#385723"/>
</g>
<!-- menu scrollbar -->
<g fill="#fff" stroke="#a6a6a6"><rect x="666.5" y="4.5" width="14" height="14"/><rect x="666.5" y="19.5" width="14" height="209"/><rect x="666.5" y="233.5" width="14" height="13"/></g>
<path d="M670 13H677L673.5 9.5Z" fill="#666"/><path d="M670 238H677L673.5 242Z" fill="#666"/>
<!-- highlight -->
<rect x="503" y="191" width="36" height="34.5" rx="4" fill="#f00"/>
<rect x="510.5" y="198.5" width="21" height="20" fill="#fff"/>
<rect x="514.5" y="200.5" width="12" height="12" fill="#f00" stroke="#f29436" stroke-width="1.5"/>
<!-- badge -->
<circle cx="477" cy="208" r="19.5" fill="#fff" filter="url(#sh)"/>
<circle cx="477" cy="208" r="17" fill="#fff" stroke="#ee1c25" stroke-width="1"/>
<path d="M490 202C492 206 492 211 490 215M464 202C462 206 462 211 464 215" fill="none" stroke="#bbb" stroke-width="1.5"/>
<text x="477" y="217" class="c" font-size="25" font-weight="bold" style="fill:#e60012">6</text>
<!-- menu items -->
<rect x="507.5" y="232.5" width="15" height="15" fill="#fff" stroke="#e2e2e2"/>
<text x="532" y="244" style="fill:#8c8c8c" textLength="86" lengthAdjust="spacingAndGlyphs">塗りつぶしなし(N)</text><rect x="600" y="246" width="8" height="1" fill="#8c8c8c"/>
<path d="M520 268C523 262 518 259 513 260C508 261 506 267 509 270C511 272 512 267 514 268C516 270 513 274 516 274C518 274 520 271 520 268Z" fill="#fff" stroke="#444"/>
<circle cx="513" cy="263" r="1" fill="#e66"/><circle cx="517" cy="264" r="1" fill="#2e8bd3"/><circle cx="518" cy="268" r="1" fill="#b146c2"/>
<text x="532" y="271" style="fill:#333" textLength="102" lengthAdjust="spacingAndGlyphs">塗りつぶしの色(M)...</text><rect x="612" y="273" width="9" height="1" fill="#333"/>
<rect x="507.5" y="288.5" width="15" height="12" fill="#fff" stroke="#2e75b6"/><path d="M508 300L513 293L517 297L520 294L522 298V300Z" fill="#7cb4e6"/><circle cx="519" cy="291.5" r="1.2" fill="#ed7d31"/>
<text x="532" y="299" style="fill:#333" textLength="41" lengthAdjust="spacingAndGlyphs">図(P)...</text><rect x="549" y="301" width="7" height="1" fill="#333"/>
<rect x="507.5" y="315.5" width="15" height="15" fill="url(#gg)" stroke="#444"/>
<text x="532" y="326" style="fill:#333" textLength="81" lengthAdjust="spacingAndGlyphs">グラデーション(G)</text><rect x="595" y="328" width="9" height="1" fill="#333"/>
<path d="M669 316.5L673.5 321.5L669 326.5" fill="none" stroke="#555"/>
<rect x="507.5" y="343.5" width="15" height="14" fill="#fff" stroke="#444"/>
<g fill="#2e75b6"><rect x="510" y="346" width="2" height="2"/><rect x="514" y="346" width="2" height="2"/><rect x="518" y="349" width="2" height="2"/><rect x="515" y="353" width="2" height="2"/><rect x="518" y="353" width="2" height="2"/><rect x="510" y="350" width="1" height="1"/></g>
<text x="532" y="354" style="fill:#333" textLength="61" lengthAdjust="spacingAndGlyphs">テクスチャ(T)</text><rect x="579" y="356" width="7" height="1" fill="#333"/>
<path d="M669 344.5L673.5 349.5L669 354.5" fill="none" stroke="#555"/>
<!-- vertical scrollbar -->
<rect x="1345" y="212" width="21" height="466" fill="#e6e6e6"/>
<rect x="1348.5" y="215.5" width="14" height="14" fill="#fff" stroke="#ababab"/><path d="M1352 224.5H1359L1355.5 220.5Z" fill="#777"/>
<rect x="1348.5" y="230.5" width="14" height="366" fill="#fff" stroke="#ababab"/>
<rect x="1348.5" y="665.5" width="14" height="14" fill="#fff" stroke="#ababab"/><path d="M1352 671H1359L1355.5 675Z" fill="#777"/>
<!-- sheet tabs -->
<rect y="678" width="1366" height="28" fill="#e6e6e6"/>
<path d="M0 678.5H100M199 678.5H1344" stroke="#9c9c9c"/>
<path d="M31 688V695L27 691.5Z M56 688V695L60 691.5Z" fill="#c2c2c2"/>
<path d="M100.5 678V702H198.5V678" fill="#fff" stroke="#9c9c9c"/>
<rect x="100" y="701" width="99" height="2.5" fill="#217346"/>
<text x="114" y="696" font-size="13" class="g" textLength="71" lengthAdjust="spacingAndGlyphs">2019年比較</text>
<circle cx="240" cy="692" r="7.5" fill="none" stroke="#777" stroke-width="1.2"/><path d="M236 692H244M240 688V696" stroke="#666" stroke-width="1.3"/>
<g fill="#a6a6a6"><rect x="819" y="687" width="2" height="2"/><rect x="819" y="692" width="2" height="2"/><rect x="819" y="696" width="2" height="2"/></g>
<rect x="836.5" y="685.5" width="507" height="14" fill="#d9d9d9" stroke="#ababab"/>
<rect x="836.5" y="685.5" width="14" height="14" fill="#fff" stroke="#ababab"/><rect x="851" y="685.5" width="449" height="14" fill="#fff" stroke="#ababab"/><rect x="1330.5" y="685.5" width="13" height="14" fill="#fff" stroke="#ababab"/>
<path d="M846 689V696L842 692.5Z M1337 689V696L1341 692.5Z" fill="#666"/>
<!-- status bar -->
<rect y="706" width="1366" height="22" fill="#f3f2f1"/><rect y="706" width="1366" height="1" fill="#cfcfcf"/>
<path d="M8.5 712.5H21.5M8.5 715.5H21.5M8.5 712.5V723.5H13" fill="none" stroke="#555"/><circle cx="17.5" cy="719.5" r="4" fill="none" stroke="#555"/><circle cx="17.5" cy="719.5" r="1.8" fill="#555"/>
<rect x="1060" y="707" width="40" height="21" fill="#c6c5c3"/>
<path d="M1073.5 711.5H1085.5V723.5H1073.5ZM1077.5 711.5V723.5M1081.5 711.5V723.5M1073.5 715.5H1085.5M1073.5 719.5H1085.5" fill="none" stroke="#333"/>
<path d="M1113.5 711.5H1126.5V724.5H1113.5ZM1116.5 714.5H1123.5V721.5H1116.5ZM1118 716.5H1122M1118 719H1122" fill="none" stroke="#444"/>
<path d="M1153.5 711.5H1166.5V724.5H1153.5ZM1153.5 720.5H1160.5V711.5" fill="none" stroke="#444"/>
<path d="M1186 717.5H1194M1303 717.5H1311M1307 713V721.5" stroke="#555" fill="none"/>
<rect x="1199" y="717" width="100" height="1" fill="#a6a6a6"/><rect x="1247" y="712" width="5" height="11" fill="#666"/>
<text x="1325" y="722" font-size="13" style="fill:#666" textLength="33" lengthAdjust="spacingAndGlyphs">100%</text>
</svg>
</body></html>
